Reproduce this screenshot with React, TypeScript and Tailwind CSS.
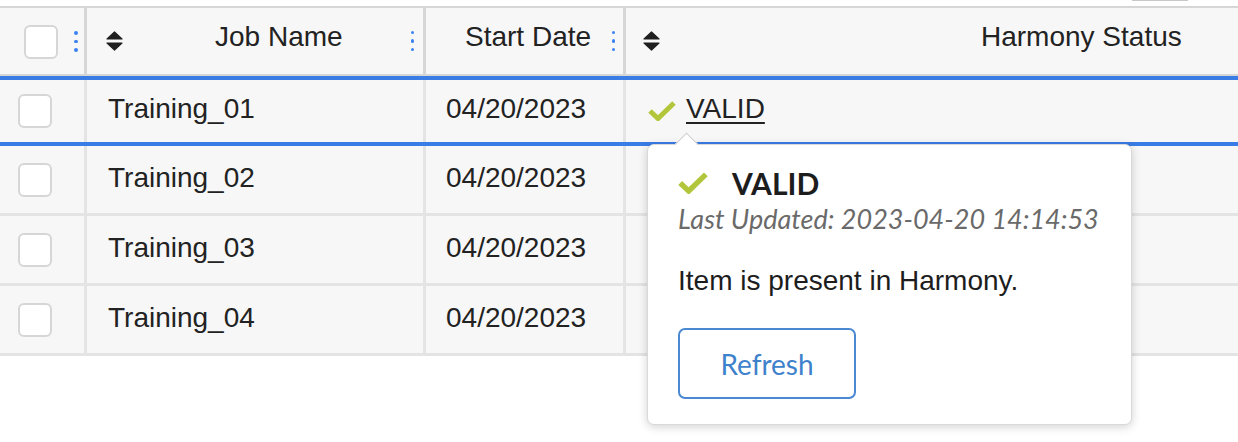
import type { ReactNode } from 'react';

const rows = [
  { name: 'Training_01', date: '04/20/2023', active: true },
  { name: 'Training_02', date: '04/20/2023' },
  { name: 'Training_03', date: '04/20/2023' },
  { name: 'Training_04', date: '04/20/2023' },
];

function Kebab() {
  return (
    <div className="flex flex-col gap-[5px]">
      <span className="h-[3.5px] w-[3.5px] rounded-full bg-[#3b82f0]" />
      <span className="h-[3.5px] w-[3.5px] rounded-full bg-[#3b82f0]" />
      <span className="h-[3.5px] w-[3.5px] rounded-full bg-[#3b82f0]" />
    </div>
  );
}

function SortIcon() {
  return (
    <svg width="17" height="20" viewBox="0 0 17 20" className="shrink-0">
      <path d="M1 8 L8.5 1 L16 8 Z" fill="#1f1f1f" strokeLinejoin="round" stroke="#1f1f1f" strokeWidth="1.2" />
      <path d="M1 12 L16 12 L8.5 19 Z" fill="#1f1f1f" strokeLinejoin="round" stroke="#1f1f1f" strokeWidth="1.2" />
    </svg>
  );
}

function Check({ w = 28, h = 20 }: { w?: number; h?: number }) {
  return (
    <svg width={w} height={h} viewBox="0 0 28 20" className="shrink-0">
      <polyline points="2,10 10,17.5 26,2" fill="none" stroke="#b3c63b" strokeWidth="5" />
    </svg>
  );
}

function Box({ className = '' }: { className?: string }) {
  return <div className={`h-[34px] w-[34px] rounded-[6px] border-2 border-[#d6d6d6] bg-white ${className}`} />;
}

function Cell({ children, className = '' }: { children?: ReactNode; className?: string }) {
  return <div className={`flex items-center ${className}`}>{children}</div>;
}

export default function App() {
  return (
    <div className="relative h-[442px] w-[1238px] overflow-hidden bg-white font-['Liberation_Sans',Arial,sans-serif] text-[28px] text-[#222]">
      <div className="flex h-[6px]">
        <div className="ml-[1132px] h-px w-[56px] bg-[#c9c9c9]" />
      </div>

      {/* header */}
      <div className="grid h-[70px] grid-cols-[87px_339px_200px_1fr] border-y-2 border-[#d6d6d6] bg-[#f7f7f7]">
        <Cell className="border-r-[3px] border-[#d6d6d6] pl-[24px]">
          <Box className="mt-[2px]" />
          <div className="ml-[16px] mt-[1px]">
            <Kebab />
          </div>
        </Cell>
        <Cell className="border-r-[3px] border-[#d6d6d6] pl-[19px] pr-[9px]">
          <SortIcon />
          <span className="ml-[92px] -mt-[8px]">Job Name</span>
          <div className="ml-auto">
            <Kebab />
          </div>
        </Cell>
        <Cell className="border-r-[3px] border-[#d6d6d6] pl-[39px] pr-[8px]">
          <span className="-mt-[8px]">Start Date</span>
          <div className="ml-auto">
            <Kebab />
          </div>
        </Cell>
        <Cell className="pl-[17px]">
          <SortIcon />
          <span className="ml-[321px] -mt-[8px]">Harmony Status</span>
        </Cell>
      </div>

      {/* body */}
      {rows.map((r) => (
        <div
          key={r.name}
          className={`grid grid-cols-[87px_339px_200px_1fr] bg-[#f7f7f7] ${
            r.active ? 'h-[70px] border-y-4 border-[#3a7ce6]' : 'h-[70px] border-b-[3px] border-[#e4e4e4]'
          }`}
        >
          <Cell className="border-r-[3px] border-[#e4e4e4] pl-[18px]">
            <Box />
          </Cell>
          <Cell className="border-r-[3px] border-[#e4e4e4] pl-[21px]">
            <span className="-mt-[4px]">{r.name}</span>
          </Cell>
          <Cell className="border-r-[3px] border-[#e4e4e4] pl-[20px]">
            <span className="-mt-[4px]">{r.date}</span>
          </Cell>
          <Cell className="pl-[22px]">
            {r.active && (
              <>
                <Check />
                <span className="ml-[10px] -mt-[4px] underline decoration-2 underline-offset-[4px]">VALID</span>
              </>
            )}
          </Cell>
        </div>
      ))}

      {/* popover */}
      <div className="absolute left-[647px] top-[144px] h-[281px] w-[485px] rounded-[7px] border border-[#d9d9d9] bg-white pl-[30px] shadow-[0_2px_10px_rgba(0,0,0,0.18)]">
        <div className="absolute left-[30px] top-[-9px] h-[17px] w-[17px] rotate-45 border-l border-t border-[#cfcfcf] bg-white" />
        <div className="mt-[23px] flex items-center">
          <Check w={30} h={22} />
          <span className="ml-[24px] font-['Lato',sans-serif] text-[30px] font-bold leading-none text-[#1d1d1d]">VALID</span>
        </div>
        <div className="mt-[4px] font-['Lato',sans-serif] text-[27px] italic leading-[34px] text-[#6a6a6a]">
          Last Updated: 2023-04-20 14:14:53
        </div>
        <div className="mt-[28px] leading-[34px] text-[#1d1d1d]">Item is present in Harmony.</div>
        <button className="mt-[30px] flex h-[71px] w-[178px] items-center justify-center rounded-[7px] border-2 border-[#4a88d2] bg-white font-['Lato',sans-serif] text-[28px] text-[#3f82cc]">
          Refresh
        </button>
      </div>
    </div>
  );
}
